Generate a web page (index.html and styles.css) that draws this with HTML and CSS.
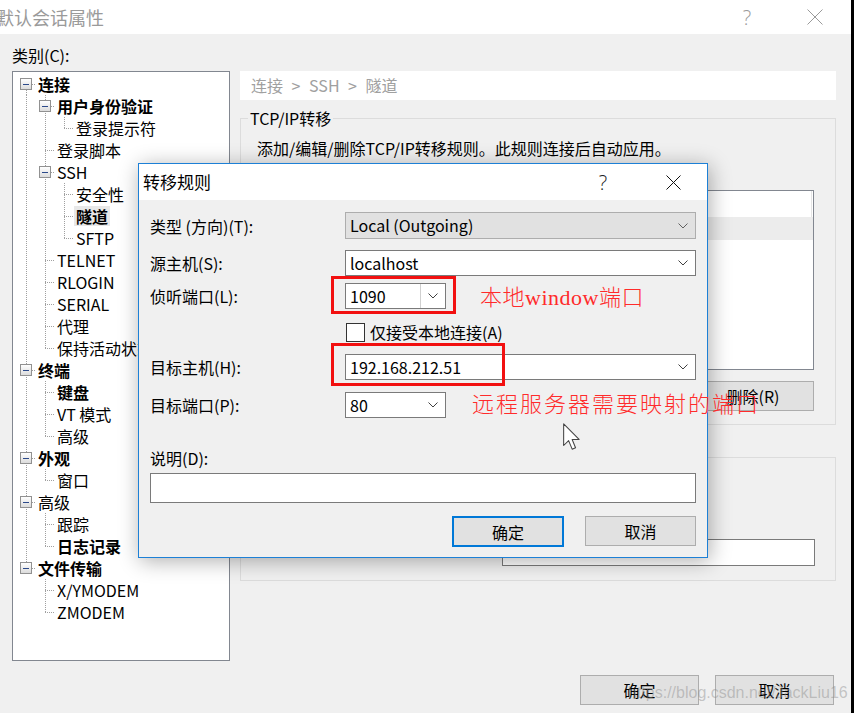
FILE: index.html
```html
<!DOCTYPE html>
<html lang="zh-CN">
<head>
<meta charset="utf-8">
<title>默认会话属性</title>
<link rel="stylesheet" href="styles.css">
</head>
<body>
<div class="window">
  <div class="titlebar">
    <div class="title">默认会话属性</div>
    <div class="tb-btn help">?</div>
    <div class="tb-btn close">
      <svg width="16" height="16" viewBox="0 0 16 16"><path d="M0.5 0.5L15.5 15.5M15.5 0.5L0.5 15.5" stroke="#9a9a9a" stroke-width="1" fill="none"/></svg>
    </div>
  </div>

  <div class="main">
    <div class="left">
      <div class="cat-label">类别(C):</div>
      <div class="tree">
        <div class="row"><span class="c f"><i class="box"></i></span><span class="tx b">连接</span></div>
        <div class="row"><span class="c v"></span><span class="c t"><i class="box"></i></span><span class="tx b">用户身份验证</span></div>
        <div class="row"><span class="c v"></span><span class="c v"></span><span class="c l"></span><span class="tx">登录提示符</span></div>
        <div class="row"><span class="c v"></span><span class="c t"></span><span class="tx">登录脚本</span></div>
        <div class="row"><span class="c v"></span><span class="c t"><i class="box"></i></span><span class="tx">SSH</span></div>
        <div class="row"><span class="c v"></span><span class="c v"></span><span class="c t"></span><span class="tx">安全性</span></div>
        <div class="row"><span class="c v"></span><span class="c v"></span><span class="c t"></span><span class="tx b sel">隧道</span></div>
        <div class="row"><span class="c v"></span><span class="c v"></span><span class="c l"></span><span class="tx">SFTP</span></div>
        <div class="row"><span class="c v"></span><span class="c t"></span><span class="tx">TELNET</span></div>
        <div class="row"><span class="c v"></span><span class="c t"></span><span class="tx">RLOGIN</span></div>
        <div class="row"><span class="c v"></span><span class="c t"></span><span class="tx">SERIAL</span></div>
        <div class="row"><span class="c v"></span><span class="c t"></span><span class="tx">代理</span></div>
        <div class="row"><span class="c v"></span><span class="c l"></span><span class="tx">保持活动状态</span></div>
        <div class="row"><span class="c t"><i class="box"></i></span><span class="tx b">终端</span></div>
        <div class="row"><span class="c v"></span><span class="c t"></span><span class="tx b">键盘</span></div>
        <div class="row"><span class="c v"></span><span class="c t"></span><span class="tx">VT 模式</span></div>
        <div class="row"><span class="c v"></span><span class="c l"></span><span class="tx">高级</span></div>
        <div class="row"><span class="c t"><i class="box"></i></span><span class="tx b">外观</span></div>
        <div class="row"><span class="c v"></span><span class="c l"></span><span class="tx">窗口</span></div>
        <div class="row"><span class="c t"><i class="box"></i></span><span class="tx">高级</span></div>
        <div class="row"><span class="c v"></span><span class="c t"></span><span class="tx">跟踪</span></div>
        <div class="row"><span class="c v"></span><span class="c l"></span><span class="tx b">日志记录</span></div>
        <div class="row"><span class="c l"><i class="box"></i></span><span class="tx b">文件传输</span></div>
        <div class="row"><span class="c"></span><span class="c t"></span><span class="tx">X/YMODEM</span></div>
        <div class="row"><span class="c"></span><span class="c l"></span><span class="tx">ZMODEM</span></div>
      </div>
    </div>

    <div class="right">
      <div class="crumb">连接 &gt; SSH &gt; 隧道</div>
      <fieldset class="group g1">
        <legend>TCP/IP转移</legend>
        <div class="g1-body">
          <div class="desc">添加/编辑/删除TCP/IP转移规则。此规则连接后自动应用。</div>
          <div class="list">
            <div class="list-head"></div>
            <div class="list-sel"></div>
          </div>
          <div class="list-btns">
            <div class="btn wide">添加(A)...</div>
            <div class="btn wide">编辑(E)...</div>
            <div class="btn wide">删除(R)</div>
          </div>
        </div>
      </fieldset>
      <fieldset class="group g2">
        <legend>X11</legend>
        <div class="g2-body">
          <div class="g2-row">
            <div class="g2-label">远程显示设置(g)</div>
            <div class="g2-input"></div>
          </div>
        </div>
      </fieldset>
    </div>
  </div>

  <div class="footer">
    <div class="btn foot">确定</div>
    <div class="btn foot">取消</div>
  </div>

  <div class="dialog">
    <div class="dtitle">
      <div class="dtitle-text">转移规则</div>
      <div class="dbtn dhelp">?</div>
      <div class="dbtn dclose">
        <svg width="15" height="15" viewBox="0 0 15 15"><path d="M0.5 0.5L14.5 14.5M14.5 0.5L0.5 14.5" stroke="#111" stroke-width="1" fill="none"/></svg>
      </div>
    </div>
    <div class="dbody">
      <div class="frow r1">
        <div class="flabel">类型 (方向)(T):</div>
        <div class="combo list-combo full">
          <div class="val">Local (Outgoing)</div>
          <div class="drop"><svg width="10" height="6" viewBox="0 0 10 6"><path d="M0.5 0.5L5 5L9.5 0.5" stroke="#606060" fill="none"/></svg></div>
        </div>
      </div>
      <div class="frow r2">
        <div class="flabel">源主机(S):</div>
        <div class="combo full">
          <div class="val">localhost</div>
          <div class="drop"><svg width="10" height="6" viewBox="0 0 10 6"><path d="M0.5 0.5L5 5L9.5 0.5" stroke="#404040" fill="none"/></svg></div>
        </div>
      </div>
      <div class="frow r3">
        <div class="flabel">侦听端口(L):</div>
        <div class="combo short">
          <div class="val">1090</div>
          <div class="drop split"><svg width="10" height="6" viewBox="0 0 10 6"><path d="M0.5 0.5L5 5L9.5 0.5" stroke="#404040" fill="none"/></svg></div>
        </div>
      </div>
      <div class="frow rc">
        <div class="flabel"></div>
        <div class="check"></div>
        <div class="check-label">仅接受本地连接(A)</div>
      </div>
      <div class="frow r4">
        <div class="flabel">目标主机(H):</div>
        <div class="combo full">
          <div class="val">192.168.212.51</div>
          <div class="drop"><svg width="10" height="6" viewBox="0 0 10 6"><path d="M0.5 0.5L5 5L9.5 0.5" stroke="#404040" fill="none"/></svg></div>
        </div>
      </div>
      <div class="frow r5">
        <div class="flabel">目标端口(P):</div>
        <div class="combo short">
          <div class="val">80</div>
          <div class="drop"><svg width="10" height="6" viewBox="0 0 10 6"><path d="M0.5 0.5L5 5L9.5 0.5" stroke="#404040" fill="none"/></svg></div>
        </div>
      </div>
      <div class="dlabel">说明(D):</div>
      <div class="dinput"></div>
      <div class="dbtns">
        <div class="btn dok">确定</div>
        <div class="btn dcancel">取消</div>
      </div>
    </div>
  </div>

  <div class="anno-box box1"></div>
  <div class="anno-box box2"></div>
  <div class="anno-text t1">本地window端口</div>
  <div class="anno-text t2">远程服务器需要映射的端口</div>
  <svg class="cursor" width="17" height="28" viewBox="0 0 13 21"><path d="M0.5 0.5L0.5 17L4.3 13.3L7 19.8L9.6 18.7L7 12.4L12.3 12.4Z" fill="#fff" stroke="#444" stroke-width="0.8" stroke-linejoin="round"/></svg>
  <div class="watermark">https://blog.csdn.net/JackLiu16</div>
</div>
<div class="edge"></div>
</body>
</html>
```

FILE: styles.css
```css
html, body {
  margin: 0;
  padding: 0;
}
body {
  width: 854px;
  height: 713px;
  overflow: hidden;
  display: flex;
  background: #000;
  font-family: "Noto Sans CJK SC", "Noto Sans", sans-serif;
  font-size: 16px;
  color: #000;
}
.window {
  position: relative;
  width: 851px;
  height: 713px;
  background: #f0f0f0;
  overflow: hidden;
  flex: none;
}
.edge {
  width: 3px;
  background: #000;
}

/* title bar */
.titlebar {
  height: 34px;
  background: #fff;
  display: flex;
  align-items: center;
}
.title {
  flex: 1;
  margin-left: -4px;
  font-size: 18px;
  line-height: 34px;
  color: #9a9a9a;
}
.tb-btn {
  width: 46px;
  height: 34px;
  display: flex;
  align-items: center;
  justify-content: center;
}
.help {
  font-size: 20px;
  color: #9a9a9a;
  font-family: "Open Sans", sans-serif;
  font-weight: 300;
}
.close {
  margin-left: 22px;
  margin-right: 13px;
}

/* main area */
.main {
  display: flex;
  gap: 10px;
  padding-left: 12px;
  height: 627px;
}
.left {
  width: 218px;
  display: flex;
  flex-direction: column;
}
.cat-label {
  height: 37px;
  box-sizing: border-box;
  padding-top: 10px;
  line-height: 22px;
}
.tree {
  height: 590px;
  box-sizing: border-box;
  border: 1px solid #828790;
  background: #fff;
  padding: 1px 0 0 4px;
}
.row {
  height: 22px;
  display: flex;
  align-items: center;
  white-space: nowrap;
}
.c {
  width: 19px;
  height: 22px;
  flex: none;
  display: flex;
  align-items: center;
  background-repeat: no-repeat;
}
.v {
  background-image: repeating-linear-gradient(to bottom, #a0a0a0 0 1px, transparent 1px 2px);
  background-size: 1px 22px;
  background-position: 9px 0;
}
.t {
  background-image: repeating-linear-gradient(to bottom, #a0a0a0 0 1px, transparent 1px 2px),
                    repeating-linear-gradient(to right, #a0a0a0 0 1px, transparent 1px 2px);
  background-size: 1px 22px, 10px 1px;
  background-position: 9px 0, 9px 11px;
}
.l {
  background-image: repeating-linear-gradient(to bottom, #a0a0a0 0 1px, transparent 1px 2px),
                    repeating-linear-gradient(to right, #a0a0a0 0 1px, transparent 1px 2px);
  background-size: 1px 11px, 10px 1px;
  background-position: 9px 0, 9px 11px;
}
.f {
  background-image: repeating-linear-gradient(to bottom, #a0a0a0 0 1px, transparent 1px 2px),
                    repeating-linear-gradient(to right, #a0a0a0 0 1px, transparent 1px 2px);
  background-size: 1px 11px, 10px 1px;
  background-position: 9px 11px, 9px 11px;
}
.box {
  width: 12px;
  height: 12px;
  box-sizing: border-box;
  margin-left: 3px;
  border: 1px solid #919191;
  background: linear-gradient(#ffffff, #dcdcdc);
  display: flex;
  align-items: center;
  justify-content: center;
}
.box::before {
  content: "";
  width: 6px;
  height: 1px;
  background: #2c4a8a;
}
.tx {
  padding: 0 2px;
  line-height: 20px;
  height: 20px;
}
.tx.b {
  font-weight: 700;
}
.tx.sel {
  background: #e8e8e8;
}

/* right column */
.right {
  width: 596px;
  padding-top: 37px;
  box-sizing: border-box;
}
.crumb {
  height: 29px;
  background: #fff;
  color: #a0a0a0;
  font-size: 16px;
  word-spacing: 5px;
  line-height: 29px;
  padding-left: 11px;
}
.group {
  margin: 0;
  padding: 0;
  border: 1px solid #dcdcdc;
  min-width: 0;
}
.group legend {
  padding: 0 2px;
  margin-left: 7px;
  line-height: 22px;
}
.g1 {
  margin-top: 7px;
}
.g1-body {
  padding: 8px 21px 13px 16px;
}
.desc {
  line-height: 22px;
}
.list {
  margin-top: 31px;
  height: 180px;
  box-sizing: border-box;
  border: 1px solid #828790;
  background: #fff;
}
.list-head {
  height: 26px;
  width: calc(100% - 2px);
  border-right: 1px solid #e5e5e5;
}
.list-sel {
  height: 23px;
  background: #ececec;
}
.list-btns {
  margin-top: 11px;
  display: flex;
  justify-content: flex-end;
  gap: 12px;
}
.btn {
  height: 30px;
  box-sizing: border-box;
  border: 1px solid #adadad;
  background: #e1e1e1;
  display: flex;
  align-items: center;
  justify-content: center;
  line-height: 20px;
  white-space: nowrap;
}
.btn.wide {
  width: 122px;
}
.g2 {
  margin-top: 21px;
}
.g2-body {
  padding: 71px 20px 14px 16px;
}
.g2-row {
  display: flex;
  align-items: flex-start;
}
.g2-label {
  flex: 1;
  padding-left: 0;
  margin-top: -8px;
  line-height: 20px;
}
.g2-input {
  width: 313px;
  height: 27px;
  box-sizing: border-box;
  border: 1px solid #7a7a7a;
  background: #fff;
}

/* footer */
.footer {
  margin-top: 14px;
  display: flex;
  justify-content: flex-end;
  gap: 16px;
  padding-right: 17px;
}
.btn.foot {
  width: 119px;
}

/* dialog */
.dialog {
  position: absolute;
  left: 138px;
  top: 163px;
  width: 570px;
  height: 395px;
  box-sizing: border-box;
  border: 1px solid #1d80d6;
  background: #f0f0f0;
  box-shadow: 2px 3px 20px rgba(0, 0, 0, 0.32);
  display: flex;
  flex-direction: column;
}
.dtitle {
  height: 36px;
  background: #fff;
  display: flex;
  align-items: center;
  flex: none;
}
.dtitle-text {
  flex: 1;
  padding-left: 4px;
  font-size: 17px;
  line-height: 36px;
}
.dbtn {
  width: 46px;
  height: 36px;
  display: flex;
  align-items: center;
  justify-content: center;
}
.dhelp {
  font-size: 20px;
  font-family: "Open Sans", sans-serif;
  font-weight: 300;
  color: #222;
}
.dclose {
  margin-left: 24px;
  margin-right: 11px;
}
.dbody {
  padding: 12px 11px 0 11px;
  display: flex;
  flex-direction: column;
}
.frow {
  display: flex;
  align-items: center;
}
.flabel {
  width: 195px;
  flex: none;
  line-height: 22px;
}
.r2 { margin-top: 11px; }
.r3 { margin-top: 7px; }
.rc { margin-top: 13px; height: 20px; }
.r4 { margin-top: 12px; }
.r5 { margin-top: 12px; }
.combo {
  display: flex;
  height: 26px;
  box-sizing: border-box;
  border: 1px solid #7a7a7a;
  background: #fff;
}
.combo.full { width: 351px; }
.combo.short { width: 101px; }
.combo.list-combo {
  height: 27px;
  background: #e1e1e1;
  border-color: #adadad;
}
.combo .val {
  flex: 1;
  padding-left: 4px;
  line-height: 24px;
  white-space: nowrap;
}
.combo .drop {
  width: 24px;
  display: flex;
  align-items: center;
  justify-content: center;
}
.combo .drop.split {
  border-left: 1px solid #d0d0d0;
}
.check {
  width: 19px;
  height: 19px;
  box-sizing: border-box;
  margin-left: 1px;
  border: 1px solid #333;
  background: #fff;
}
.check-label {
  margin-left: 5px;
  line-height: 22px;
}
.dlabel {
  margin-top: 29px;
  line-height: 22px;
}
.dinput {
  margin-top: 4px;
  height: 30px;
  box-sizing: border-box;
  border: 1px solid #7a7a7a;
  background: #fff;
}
.dbtns {
  margin-top: 13px;
  display: flex;
  justify-content: flex-end;
  gap: 21px;
}
.btn.dok {
  width: 112px;
  height: 31px;
  border: 2px solid #0078d7;
}
.btn.dcancel {
  width: 111px;
}

/* annotations */
.anno-box {
  position: absolute;
  box-sizing: border-box;
  border: 3px solid #f21010;
}
.box1 {
  left: 331px;
  top: 276px;
  width: 125px;
  height: 38px;
}
.box2 {
  left: 331px;
  top: 343px;
  width: 174px;
  height: 43px;
}
.anno-text {
  position: absolute;
  color: #ff2b2b;
  font-family: "Liberation Serif", "Noto Sans CJK SC", serif;
  font-weight: 300;
  white-space: nowrap;
}
.t1 {
  left: 480px;
  top: 285px;
  font-size: 22px;
  line-height: 26px;
  letter-spacing: 0.5px;
}
.t2 {
  left: 472px;
  top: 392px;
  font-size: 22px;
  line-height: 26px;
  letter-spacing: 2px;
}
.cursor {
  position: absolute;
  left: 563px;
  top: 423px;
}
.watermark {
  position: absolute;
  left: 628px;
  top: 682px;
  font-family: "Liberation Sans", sans-serif;
  font-size: 16px;
  line-height: 22px;
  color: rgba(140, 140, 140, 0.45);
  white-space: nowrap;
}
```
